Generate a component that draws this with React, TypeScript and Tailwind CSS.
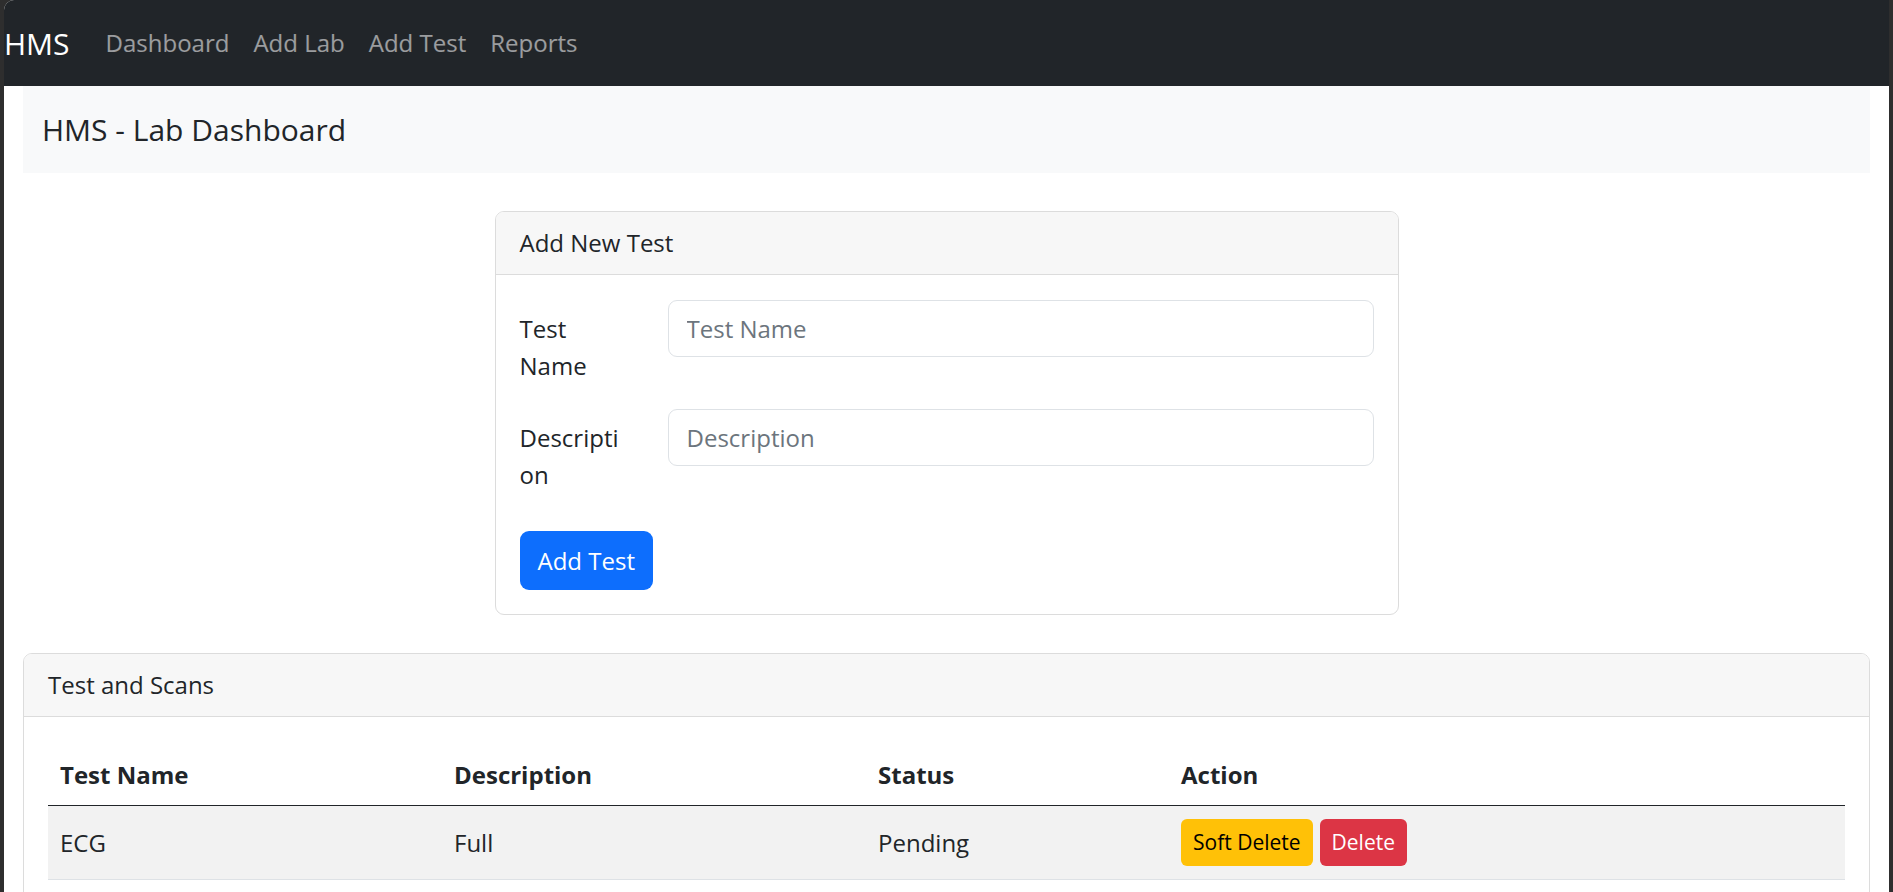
import React from "react";

const navLinks = ["Dashboard", "Add Lab", "Add Test", "Reports"];

const tests = [{ name: "ECG", description: "Full", status: "Pending" }];

const Navbar = () => (
  <nav className="h-[86px] bg-[#212529] flex items-center">
    <span className="text-[30px] leading-[45px] text-white mr-[24px]">HMS</span>
    {navLinks.map((link) => (
      <a key={link} className="px-[12px] text-[24px] leading-[36px] text-white/55">
        {link}
      </a>
    ))}
  </nav>
);

const FormRow = ({ label, placeholder, className }: { label: string; placeholder: string; className?: string }) => (
  <div className={`flex gap-[36px] ${className ?? ""}`}>
    <label className="w-[112px] shrink-0 break-words pt-[10px] pb-[10px] text-[24px] leading-[37px]">{label}</label>
    <input
      placeholder={placeholder}
      className="flex-1 min-w-0 h-[57px] px-[18px] border border-[#dee2e6] rounded-[9px] text-[24px] text-[#212529] placeholder:text-[#6c757d] outline-none"
    />
  </div>
);

const Card = ({ title, children, className }: { title: string; children: React.ReactNode; className?: string }) => (
  <div className={`border border-[#dcdcdc] rounded-[9px] overflow-hidden ${className ?? ""}`}>
    <div className="h-[63px] px-[24px] flex items-center bg-[#f7f7f7] border-b border-[#dcdcdc] text-[24px]">{title}</div>
    {children}
  </div>
);

export default function App() {
  return (
    <div className="h-[892px] overflow-hidden bg-[#2e2e2e] px-[4px] font-['Open_Sans',sans-serif] text-[#212529]">
      <div className="h-full bg-white rounded-tl-[10px] overflow-hidden">
        <Navbar />
        <div className="px-[19px]">
          <div className="h-[87px] bg-[#f8f9fa] flex items-center px-[19px]">
            <h1 className="text-[30px] leading-[45px]">HMS - Lab Dashboard</h1>
          </div>

          <Card title="Add New Test" className="w-[904px] mx-auto mt-[38px]">
            <div className="px-[24px] pt-[25px] pb-[24px]">
              <FormRow label="Test Name" placeholder="Test Name" className="mb-[15px]" />
              <FormRow label="Description" placeholder="Description" className="mb-[28px]" />
              <button className="h-[59px] px-[18px] rounded-[9px] bg-[#0d6efd] text-white text-[24px] leading-[36px]">
                Add Test
              </button>
            </div>
          </Card>

          <Card title="Test and Scans" className="mt-[38px]">
            <div className="px-[24px] pt-[28px] pb-[24px]">
              <table className="w-full table-fixed text-[24px] leading-[36px] text-left">
                <colgroup>
                  <col className="w-[394px]" />
                  <col className="w-[424px]" />
                  <col className="w-[303px]" />
                  <col />
                </colgroup>
                <thead>
                  <tr className="border-b border-[#212529]">
                    <th className="px-[12px] py-[12px] font-bold">Test Name</th>
                    <th className="px-[12px] py-[12px] font-bold">Description</th>
                    <th className="px-[12px] py-[12px] font-bold">Status</th>
                    <th className="px-[12px] py-[12px] font-bold">Action</th>
                  </tr>
                </thead>
                <tbody>
                  {tests.map((t) => (
                    <tr key={t.name} className="bg-[#f2f2f2] border-b border-[#dee2e6] align-middle">
                      <td className="px-[12px] py-[13px]">{t.name}</td>
                      <td className="px-[12px] py-[13px]">{t.description}</td>
                      <td className="px-[12px] py-[13px]">{t.status}</td>
                      <td className="px-[12px] py-[13px]">
                        <div className="flex gap-[7px]">
                          <button className="h-[47px] px-[12px] rounded-[6px] bg-[#ffc107] text-black text-[21px] leading-[31px]">
                            Soft Delete
                          </button>
                          <button className="h-[47px] px-[12px] rounded-[6px] bg-[#dc3545] text-white text-[21px] leading-[31px]">
                            Delete
                          </button>
                        </div>
                      </td>
                    </tr>
                  ))}
                </tbody>
              </table>
            </div>
          </Card>
        </div>
      </div>
    </div>
  );
}
